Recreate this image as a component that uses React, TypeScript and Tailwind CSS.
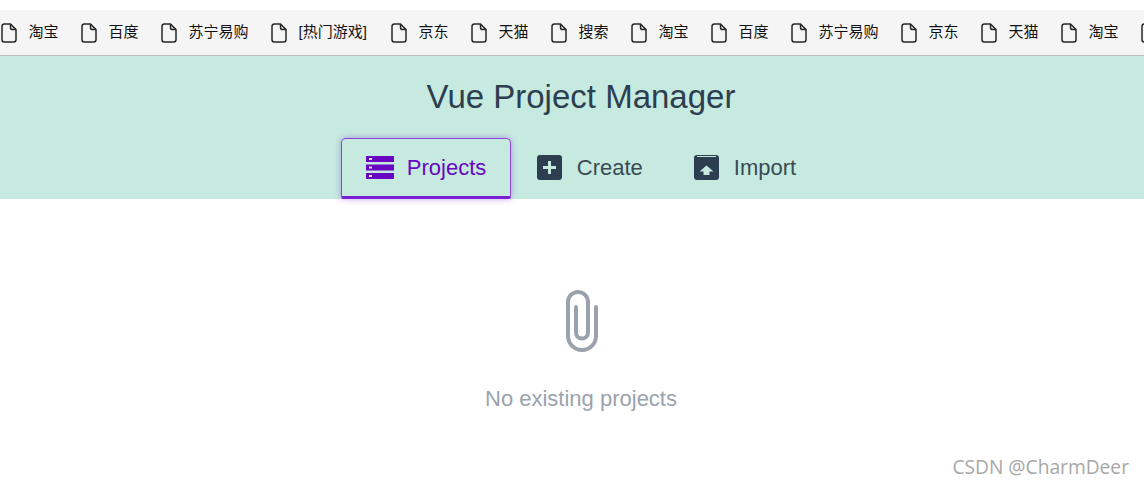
const bookmarks = [
  { label: "淘宝", width: "w-[80px]" },
  { label: "百度", width: "w-[80px]" },
  { label: "苏宁易购", width: "w-[110px]" },
  { label: "[热门游戏]", width: "w-[120px]" },
  { label: "京东", width: "w-[80px]" },
  { label: "天猫", width: "w-[80px]" },
  { label: "搜索", width: "w-[80px]" },
  { label: "淘宝", width: "w-[80px]" },
  { label: "百度", width: "w-[80px]" },
  { label: "苏宁易购", width: "w-[110px]" },
  { label: "京东", width: "w-[80px]" },
  { label: "天猫", width: "w-[80px]" },
  { label: "淘宝", width: "w-[80px]" },
  { label: "", width: "w-[3px]" },
];

function FileIcon() {
  return (
    <svg width="16" height="20" viewBox="0 0 16 20" fill="none" stroke="#262626" strokeWidth="1.5" strokeLinejoin="round" className="shrink-0">
      <path d="M3.2 1h6.3l5.5 5.6v10.2a2.2 2.2 0 0 1-2.2 2.2H3.2A2.2 2.2 0 0 1 1 16.8V3.2A2.2 2.2 0 0 1 3.2 1z" />
      <path d="M9.5 1v3.4a2.2 2.2 0 0 0 2.2 2.2H15" />
    </svg>
  );
}

function ProjectsIcon() {
  return (
    <svg width="28" height="23" viewBox="0 0 28 23" className="shrink-0">
      <path
        fill="#6806c1"
        fillRule="evenodd"
        d="M0 0h28v6H0zM3 2v2h3V2zM0 8.500h28v6H0zM3 10.500v2h3v-2zM0 17h28v6H0zM3 19v2h3v-2z"
      />
    </svg>
  );
}

function CreateIcon() {
  return (
    <svg width="25" height="25" viewBox="0 0 25 25" className="shrink-0">
      <rect width="25" height="25" rx="3" fill="#2c3e50" />
      <path d="M11 6h3v5h5v3h-5v5h-3v-5H6v-3h5z" fill="#c6eadf" />
    </svg>
  );
}

function ImportIcon() {
  return (
    <svg width="25" height="25" viewBox="0 0 25 25" className="shrink-0">
      <path d="M3 0h19a3 3 0 0 1 3 3v19a3 3 0 0 1-3 3H3a3 3 0 0 1-3-3V3a3 3 0 0 1 3-3z" fill="#2c3e50" />
      <path d="M3 1.500h19" stroke="#c6eadf" strokeWidth="1" />
      <path d="M12.500 10.500l7 6h-4v3.500h-6v-3.500h-4z" fill="#c6eadf" />
    </svg>
  );
}

function ClipIcon() {
  return (
    <svg width="32" height="62" viewBox="0 0 32 62" fill="none" stroke="#9aa3ad" strokeWidth="4" strokeLinecap="round">
      <path d="M10 17v25.500a6 6 0 0 0 12 0V12a10 10 0 0 0-20 0v34a14 14 0 0 0 28 0V17" />
    </svg>
  );
}

export default function App() {
  return (
    <div className="flex h-[486px] w-[1144px] flex-col overflow-hidden bg-white font-['Liberation_Sans','Noto_Sans_CJK_SC',sans-serif]">
      <div className="mt-[10px] flex h-[46px] shrink-0 items-center overflow-hidden whitespace-nowrap border-b border-[#bdbdbd] bg-[#f5f5f5] pl-px text-[15px] text-[#111111]">
        {bookmarks.map((b, i) => (
          <div key={i} className={`flex shrink-0 items-center gap-[11.500px] ${b.width}`}>
            <FileIcon />
            {b.label ? <span>{b.label}</span> : null}
          </div>
        ))}
      </div>

      <div className="flex h-[143px] shrink-0 flex-col items-center bg-[#c6eadf]">
        <h1 className="mt-[21px] ml-[18px] text-[33px] leading-[40px] font-normal text-[#2c3e50]">Vue Project Manager</h1>
        <nav className="mt-[21px] ml-[-7px] flex self-center">
          <div className="relative z-10 flex h-[61px] w-[170px] items-center rounded-t-[5px] rounded-b-[2px] border border-[#8e44d8] border-b-[3px] border-b-[#7a1fd6] pl-6 text-[22px] text-[#6806c1] shadow-[0_0_6px_rgba(120,30,220,0.4)]">
            <ProjectsIcon />
            <span className="ml-[13px]">Projects</span>
          </div>
          <div className="flex h-[59px] items-center pl-[26px] text-[22px] text-[#3a4a55]">
            <CreateIcon />
            <span className="ml-[15px]">Create</span>
          </div>
          <div className="flex h-[59px] items-center pl-[51px] text-[22px] text-[#3a4a55]">
            <ImportIcon />
            <span className="ml-[15px]">Import</span>
          </div>
        </nav>
      </div>

      <div className="relative flex flex-1 flex-col items-center">
        <div className="mt-[91px] ml-[20px]">
          <ClipIcon />
        </div>
        <p className="mt-[34px] ml-[18px] text-[22px] leading-[26px] text-[#9aa3ad]">No existing projects</p>
        <span className="absolute right-[15px] bottom-[7px] font-['Open_Sans',sans-serif] text-[19.200px] leading-[24px] text-[#a8a8a8]">
          CSDN @CharmDeer
        </span>
      </div>
    </div>
  );
}
